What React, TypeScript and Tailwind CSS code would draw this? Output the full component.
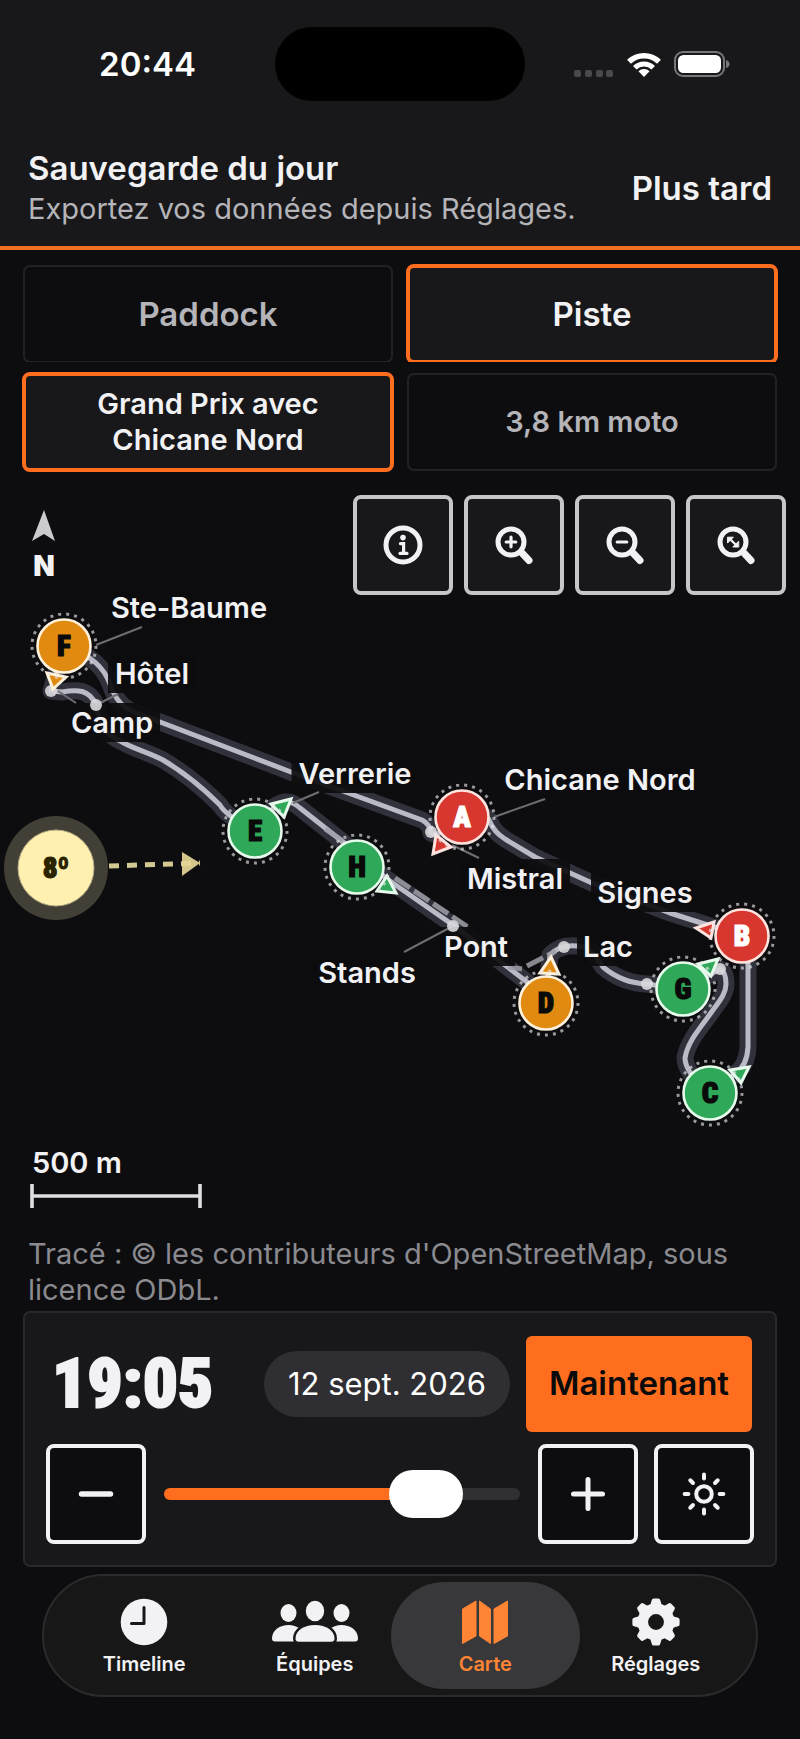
import { useState } from "react";
import type { CSSProperties, ReactNode } from "react";

type Tone = "red" | "orange" | "green";

interface IMarker {
	id: string;
	x: number;
	y: number;
	tone: Tone;
	pointer: string;
}

interface ILabel {
	text: string;
	x: number;
	y: number;
	width: number;
}

const tones = {
	red: { fill: "#d7372f", rim: "#ffe3df", ink: "#ffffff" },
	orange: { fill: "#e08a12", rim: "#fff1dc", ink: "#0a0a0a" },
	green: { fill: "#2fa85a", rim: "#e6fbec", ink: "#0a0a0a" },
};

const markers: IMarker[] = [
	{ id: "A", x: 462, y: 817, tone: "red", pointer: "436,835 451,847 433,854" },
	{ id: "B", x: 742, y: 936, tone: "red", pointer: "714,922 696,928 711,938" },
	{ id: "C", x: 710, y: 1093, tone: "green", pointer: "730,1070 749,1067 741,1083" },
	{ id: "D", x: 546, y: 1003, tone: "orange", pointer: "551,957 559,974 540,973" },
	{ id: "E", x: 255, y: 831, tone: "green", pointer: "271,804 291,799 284,817" },
	{ id: "F", x: 64, y: 646, tone: "orange", pointer: "47,673 66,677 53,689" },
	{ id: "G", x: 683, y: 989, tone: "green", pointer: "698,964 718,959 711,976" },
	{ id: "H", x: 357, y: 867, tone: "green", pointer: "387,876 396,893 377,891" },
];

const labels: ILabel[] = [
	{ text: "Ste-Baume", x: 189, y: 618, width: 158 },
	{ text: "Hôtel", x: 152, y: 684, width: 74 },
	{ text: "Camp", x: 112, y: 733, width: 82 },
	{ text: "Verrerie", x: 355, y: 784, width: 113 },
	{ text: "Chicane Nord", x: 600, y: 790, width: 190 },
	{ text: "Mistral", x: 515, y: 889, width: 96 },
	{ text: "Signes", x: 645, y: 903, width: 94 },
	{ text: "Pont", x: 476, y: 957, width: 64 },
	{ text: "Lac", x: 608, y: 957, width: 48 },
	{ text: "Stands", x: 367, y: 983, width: 98 },
];

const circuit =
	"M64 646 C92 655 104 668 110 684 C118 708 128 711 160 722 L291 772 L422 820 Q430 824 431 833 C438 838 450 826 462 817 C478 812 488 815 490 822 Q494 832 505 839 L535 857 L592 883 L670 913 L742 936 Q748 945 748 963 L748 1047 Q747 1066 735 1074 L710 1093 C692 1080 685 1066 685 1058 C688 1040 702 1026 713 1010 C722 998 726 992 726 984 Q726 972 720 969 L683 989 L647 984 Q622 983 603 967 Q590 946 577 946 Q560 944 550 955 L546 1003 L527 982 L453 925 L387 879 L343 842 L300 808 Q288 797 275 806 L255 831 Q225 815 220 805 C200 785 180 770 163 760 C150 753 134 749 122 742 C104 734 100 722 96 705 C90 690 78 689 62 692 L51 691 Z";

const dots = [
	[51, 691],
	[96, 705],
	[431, 832],
	[453, 926],
	[564, 947],
	[647, 984],
	[720, 969],
];

const leaders = [
	"M96 645 L142 627",
	"M96 705 L118 694",
	"M58 691 L76 703",
	"M293 803 L319 792",
	"M494 817 L545 799",
	"M452 845 L479 858",
	"M453 926 L404 952",
];

function TrackMarker({ marker }: { marker: IMarker }) {
	const tone = tones[marker.tone];

	return (
		<g>
			<polygon
				points={marker.pointer}
				fill={tone.fill}
				stroke={tone.rim}
				strokeWidth="3"
			/>
			<circle
				cx={marker.x}
				cy={marker.y}
				r="32"
				fill="none"
				stroke="#e5e5ea"
				strokeOpacity="0.65"
				strokeWidth="3"
				strokeDasharray="3 5.04"
			/>
			<circle
				cx={marker.x}
				cy={marker.y}
				r="26.5"
				fill={tone.fill}
				stroke={tone.rim}
				strokeWidth="2.6"
			/>
			<text
				x={marker.x}
				y={marker.y + 10}
				textAnchor="middle"
				fill={tone.ink}
				stroke={tone.ink}
				strokeWidth="1.2"
				className="font-['Roboto_Condensed','Noto_Sans_Condensed','Roboto',sans-serif] text-[29px] font-black"
			>
				{marker.id}
			</text>
		</g>
	);
}

function TrackMap() {
	return (
		<svg
			viewBox="0 486 800 746"
			className="block w-full font-['Inter',sans-serif]"
			role="img"
			aria-label="Carte de la piste"
		>
			<polygon points="44,510 55,541 44,534 32,541" fill="#cbcbce" />
			<text x="44" y="576" textAnchor="middle" fill="#f2f2f4" className="text-[28px] font-black">
				N
			</text>

			<path d={circuit} fill="none" stroke="#30313a" strokeWidth="17" strokeLinejoin="round" />
			<path d={circuit} fill="none" stroke="#b9bac6" strokeWidth="5" strokeLinejoin="round" />

			{/* pit lane */}
			<g fill="none" stroke="#9c9da6" strokeOpacity="0.85" strokeWidth="5">
				<path d="M325 829 L343 841" />
				<path d="M395 878 L468 927" strokeDasharray="18 5" />
				<path d="M508 967 L522 969" />
				<path d="M527 966 L556 951" strokeDasharray="18 5" />
			</g>

			{labels.map((label) => (
				<g key={label.text}>
					<rect
						x={label.x - label.width / 2 - 7}
						y={label.y - 30}
						width={label.width + 14}
						height="39"
						fill="#0d0d0f"
						fillOpacity="0.93"
					/>
					<text
						x={label.x}
						y={label.y}
						textAnchor="middle"
						fill="#f2f2f4"
						className="text-[29px] font-semibold"
					>
						{label.text}
					</text>
				</g>
			))}

			<g stroke="#6d6d72" strokeWidth="2">
				{leaders.map((d) => (
					<path key={d} d={d} />
				))}
			</g>
			{dots.map(([x, y]) => (
				<circle key={`${x}-${y}`} cx={x} cy={y} r="6" fill="#d6d6da" fillOpacity="0.92" />
			))}

			{/* sun position and heading */}
			<circle cx="56" cy="868" r="52" fill="#424036" />
			<circle cx="56" cy="868" r="38" fill="#fff0b0" stroke="#b5ab84" strokeWidth="1" />
			<text
				x="56"
				y="878"
				textAnchor="middle"
				fill="#2a2300"
				stroke="#2a2300"
				strokeWidth="1.2"
				className="font-['Roboto_Condensed','Noto_Sans_Condensed','Roboto',sans-serif] text-[29px] font-black"
			>
				8º
			</text>
			<path d="M109 866 L200 863" stroke="#d3c792" strokeWidth="5" strokeDasharray="10 8" />
			<polygon points="182,852 182,876 200,863" fill="#e6d797" fillOpacity="0.92" />

			{markers.map((marker) => (
				<TrackMarker key={marker.id} marker={marker} />
			))}

			<text x="32" y="1173" fill="#f2f2f4" className="text-[29px] font-semibold">
				500 m
			</text>
			<path d="M31 1196 H201 M32 1184 V1208 M200 1184 V1208" stroke="#dedee3" strokeWidth="3.6" />
		</svg>
	);
}

function Magnifier({ children }: { children: ReactNode }) {
	return (
		<svg viewBox="0 0 40 40" className="size-10" fill="none" stroke="#f2f2f4" strokeLinecap="round">
			<circle cx="17" cy="17" r="13" strokeWidth="5" />
			<path d="M28 28 L35 35.5" strokeWidth="7" />
			<g strokeWidth="3.2">{children}</g>
		</svg>
	);
}

const mapActions = [
	{
		label: "Informations",
		icon: (
			<svg viewBox="0 0 40 40" className="size-10" fill="none" stroke="#f2f2f4" strokeLinecap="round">
				<circle cx="20" cy="20" r="17" strokeWidth="5" />
				<circle cx="20" cy="12.6" r="2.8" fill="#f2f2f4" stroke="none" />
				<path d="M17.4 18.6 H20.6 V28 M17 28.4 H24" strokeWidth="3.2" />
			</svg>
		),
	},
	{
		label: "Zoom avant",
		icon: (
			<Magnifier>
				<path d="M12.2 17 H21.8 M17 12.2 V21.8" />
			</Magnifier>
		),
	},
	{
		label: "Zoom arrière",
		icon: (
			<Magnifier>
				<path d="M12.2 17 H21.8" />
			</Magnifier>
		),
	},
	{
		label: "Ajuster",
		icon: (
			<Magnifier>
				<path d="M14 14 L20.5 20.5" strokeWidth="2.4" />
				<path
					d="M11.8 12.2 H17.4 L11.8 17.8 Z M22.4 22 H16.8 L22.4 16.4 Z"
					fill="#f2f2f4"
					strokeWidth="1"
					strokeLinejoin="round"
				/>
			</Magnifier>
		),
	},
];

function StatusBar() {
	return (
		<div className="grid h-32 grid-cols-[1fr_250px_1fr] items-center">
			<span className="pl-5 text-center text-[33px] leading-10 font-semibold text-white">20:44</span>
			<div className="h-[74px] rounded-full bg-black" />
			<div className="flex items-center justify-end gap-[13px] pr-[70px]">
				<svg viewBox="0 0 40 25" className="h-[25px] w-10" fill="#49494c">
					<rect x="0" y="18" width="7" height="7" rx="2" />
					<rect x="11" y="18" width="7" height="7" rx="2" />
					<rect x="22" y="18" width="7" height="7" rx="2" />
					<rect x="32" y="18" width="7" height="7" rx="2" />
				</svg>
				<svg viewBox="0 0 34 25" className="h-[25px] w-[34px]" fill="none" stroke="#fff">
					<path d="M2 9.8 A21.6 21.6 0 0 1 32 9.8" strokeWidth="5.6" />
					<path d="M7.8 15.8 A13 13 0 0 1 26.2 15.8" strokeWidth="5" />
					<path d="M17 25 L11.4 19.2 A8 8 0 0 1 22.6 19.2 Z" fill="#fff" stroke="none" />
				</svg>
				<svg viewBox="0 0 56 26" className="h-[26px] w-14">
					<rect x="1" y="1" width="49" height="24" rx="8" fill="none" stroke="#77777b" strokeWidth="2" />
					<rect x="4" y="4" width="43" height="18" rx="5.5" fill="#fff" />
					<path d="M52 9 Q55.5 10 55.5 13 Q55.5 16 52 17 Z" fill="#77777b" />
				</svg>
			</div>
		</div>
	);
}

interface ChoiceProps {
	text: string;
	active: boolean;
	small?: boolean;
	handleClick: () => void;
}

function Choice({ text, active, small, handleClick }: ChoiceProps) {
	return (
		<button
			type="button"
			aria-pressed={active}
			onClick={handleClick}
			className={`h-24 flex-1 basis-0 rounded-md px-12 font-semibold ${
				small ? "text-[29px] leading-9" : "text-[33px] leading-10"
			} ${
				active
					? "bg-[#18181a] text-[#f2f2f4] outline-4 -outline-offset-2 outline-[#ff6e1e]"
					: "text-[#b4b4b9] outline-2 -outline-offset-1 outline-[#222225]"
			}`}
		>
			{text}
		</button>
	);
}

function SquareButton({ label, children, handleClick }: { label: string; children: ReactNode; handleClick?: () => void }) {
	return (
		<button
			type="button"
			aria-label={label}
			onClick={handleClick}
			className="flex size-24 shrink-0 items-center justify-center rounded-md bg-[#0d0d0f] outline-4 -outline-offset-2 outline-[#f2f2f4]"
		>
			<svg viewBox="0 0 48 48" className="size-12" fill="none" stroke="#f2f2f4" strokeLinecap="round">
				{children}
			</svg>
		</button>
	);
}

const rays = [0, 45, 90, 135, 180, 225, 270, 315];
const DAY = 1435;

function TimePanel() {
	const [minutes, setMinutes] = useState(1145);
	const hh = String(Math.floor(minutes / 60)).padStart(2, "0");
	const mm = String(minutes % 60).padStart(2, "0");

	const move = (delta: number) => {
		setMinutes((m) => Math.min(DAY, Math.max(0, m + delta)));
	};

	return (
		<section className="mx-6 mt-1 flex flex-col gap-[14px] rounded-md bg-[#18181a] p-6 outline-2 -outline-offset-1 outline-[#29292c]">
			<div className="flex items-center gap-4">
				<time className="flex-1 pl-1 text-[69px] leading-20 font-black text-[#f2f2f4] [-webkit-text-stroke:2px_#f2f2f4] font-['Roboto_Condensed','Noto_Sans_Condensed','Roboto',sans-serif]">
					{hh}:{mm}
				</time>
				<button
					type="button"
					className="h-[66px] rounded-full bg-[#2f2e33] px-6 text-[31px] text-white"
				>
					12 sept. 2026
				</button>
				<button
					type="button"
					onClick={() => setMinutes(1145)}
					className="h-24 rounded-md bg-[#ff6e1e] px-[23px] text-[33px] font-semibold text-[#0a0a0a]"
				>
					Maintenant
				</button>
			</div>
			<div className="flex items-center gap-5">
				<SquareButton label="Reculer" handleClick={() => move(-5)}>
					<path d="M9.5 24 H38.5" strokeWidth="5.5" />
				</SquareButton>
				<input
					type="range"
					aria-label="Heure"
					min={0}
					max={DAY}
					step={5}
					value={minutes}
					onChange={(e) => setMinutes(Number(e.target.value))}
					style={{ "--fill": `${(minutes / DAY) * 100}%` } as CSSProperties}
					className="h-12 min-w-0 flex-1 appearance-none bg-transparent [&::-webkit-slider-runnable-track]:h-3 [&::-webkit-slider-runnable-track]:rounded-full [&::-webkit-slider-runnable-track]:bg-[linear-gradient(to_right,#ff6e1e_var(--fill),#303032_var(--fill))] [&::-webkit-slider-thumb]:-mt-[18px] [&::-webkit-slider-thumb]:h-12 [&::-webkit-slider-thumb]:w-[74px] [&::-webkit-slider-thumb]:appearance-none [&::-webkit-slider-thumb]:rounded-full [&::-webkit-slider-thumb]:bg-white"
				/>
				<SquareButton label="Avancer" handleClick={() => move(5)}>
					<path d="M9.5 24 H38.5 M24 9.5 V38.5" strokeWidth="5" />
				</SquareButton>
				<SquareButton label="Soleil">
					<circle cx="24" cy="24" r="7.8" strokeWidth="4" />
					{rays.map((angle) => (
						<path key={angle} d="M24 8.4 V4.6" strokeWidth="4" transform={`rotate(${angle} 24 24)`} />
					))}
				</SquareButton>
			</div>
		</section>
	);
}

const tabs = [
	{
		label: "Timeline",
		icon: (
			<svg viewBox="0 0 48 48" className="h-12 w-12">
				<circle cx="24" cy="24" r="23.3" fill="currentColor" />
				<path d="M24 9.5 V25.5 H11.5" fill="none" stroke="#18181a" strokeWidth="3" strokeLinecap="round" strokeLinejoin="round" />
			</svg>
		),
	},
	{
		label: "Équipes",
		icon: (
			<svg viewBox="0 0 88 48" className="h-12 w-22" fill="currentColor">
				<ellipse cx="17.5" cy="15" rx="8" ry="9" />
				<ellipse cx="70.5" cy="15" rx="8" ry="9" />
				<path d="M4 43.5 Q1 43.5 1 40.5 C1 32 9 27 17.5 27 C26 27 34 32 34 43.5 Z" />
				<path d="M84 43.5 Q87 43.5 87 40.5 C87 32 79 27 70.5 27 C62 27 54 32 54 43.5 Z" />
				<ellipse cx="44" cy="13" rx="9.2" ry="10.3" />
				<path
					d="M28 43.8 Q24.5 43.8 24.5 40.5 C24.5 32.5 33 27 44 27 C55 27 63.5 32.5 63.5 40.5 Q63.5 43.8 60 43.8 Z"
					stroke="#18181a"
					strokeWidth="5"
					paintOrder="stroke"
				/>
			</svg>
		),
	},
	{
		label: "Carte",
		icon: (
			<svg viewBox="0 0 48 48" className="h-12 w-12" fill="currentColor" stroke="currentColor" strokeLinejoin="round">
				<path d="M1.5 11 L15 3 V38 L1.5 45.5 Z" />
				<path d="M18.5 3 L29.5 11 V45.5 L18.5 38 Z" />
				<path d="M33 11 L46.5 3 V38 L33 45.5 Z" />
			</svg>
		),
	},
	{
		label: "Réglages",
		icon: (
			<svg viewBox="0 0 48 48" className="h-12 w-12" fill="currentColor">
				<circle cx="24" cy="24" r="13.2" fill="none" stroke="currentColor" strokeWidth="10.5" />
				{rays.map((angle) => (
					<path
						key={angle}
						d="M18 8 L19.8 2 Q20.2 0.4 21.6 0.4 H26.4 Q27.8 0.4 28.2 2 L30 8 Z"
						transform={`rotate(${angle} 24 24)`}
					/>
				))}
			</svg>
		),
	},
];

function TabBar() {
	const [current, setCurrent] = useState("Carte");

	return (
		<nav className="mx-[42px] mt-2 flex rounded-full border-2 border-[#2b2b2d] bg-[#171718] px-[15px] py-[6px]">
			{tabs.map((tab) => (
				<button
					key={tab.label}
					type="button"
					onClick={() => setCurrent(tab.label)}
					className={`-mx-[9px] flex h-[107px] flex-1 basis-0 flex-col items-center rounded-full pt-4 text-[20px] leading-7 font-semibold ${
						current === tab.label ? "bg-[#38383a] text-[#ff8433]" : "text-[#f2f2f4]"
					}`}
				>
					{tab.icon}
					<span className="mt-1">{tab.label}</span>
				</button>
			))}
		</nav>
	);
}

function App() {
	const [view, setView] = useState("Piste");
	const [layout, setLayout] = useState("gp");

	return (
		<div className="min-h-screen bg-[#0d0d0f] pb-10 font-['Inter',sans-serif]">
			<header className="border-b-4 border-[#f0701f] bg-[#18181a]">
				<StatusBar />
				<div className="flex items-center justify-between px-7 pt-5 pb-4">
					<div>
						<h1 className="text-[33px] leading-10 font-semibold text-[#f2f2f4]">Sauvegarde du jour</h1>
						<p className="text-[29px] leading-[42px] text-[#b4b4b9]">Exportez vos données depuis Réglages.</p>
					</div>
					<button type="button" className="text-[33px] font-semibold text-[#f2f2f4]">
						Plus tard
					</button>
				</div>
			</header>

			<div className="flex gap-4 overflow-hidden px-6 pt-4">
				<Choice text="Paddock" active={view === "Paddock"} handleClick={() => setView("Paddock")} />
				<Choice text="Piste" active={view === "Piste"} handleClick={() => setView("Piste")} />
			</div>
			<div className="mt-3 flex gap-4 px-6">
				<Choice small text="Grand Prix avec Chicane Nord" active={layout === "gp"} handleClick={() => setLayout("gp")} />
				<Choice small text="3,8 km moto" active={layout === "moto"} handleClick={() => setLayout("moto")} />
			</div>

			<main className="relative mt-4">
				<TrackMap />
				<div className="absolute top-[11px] right-4 flex gap-[15px]">
					{mapActions.map((action) => (
						<button
							key={action.label}
							type="button"
							aria-label={action.label}
							className="flex size-24 items-center justify-center rounded-md bg-[#18181a] outline-4 -outline-offset-2 outline-[#c6c6c8]"
						>
							{action.icon}
						</button>
					))}
				</div>
			</main>

			<p className="mt-1 px-7 text-[29px] leading-9 text-[#8a8a8f]">
				Tracé : © les contributeurs d'OpenStreetMap, sous licence ODbL.
			</p>
			<TimePanel />
			<TabBar />
		</div>
	);
}

export default App;
